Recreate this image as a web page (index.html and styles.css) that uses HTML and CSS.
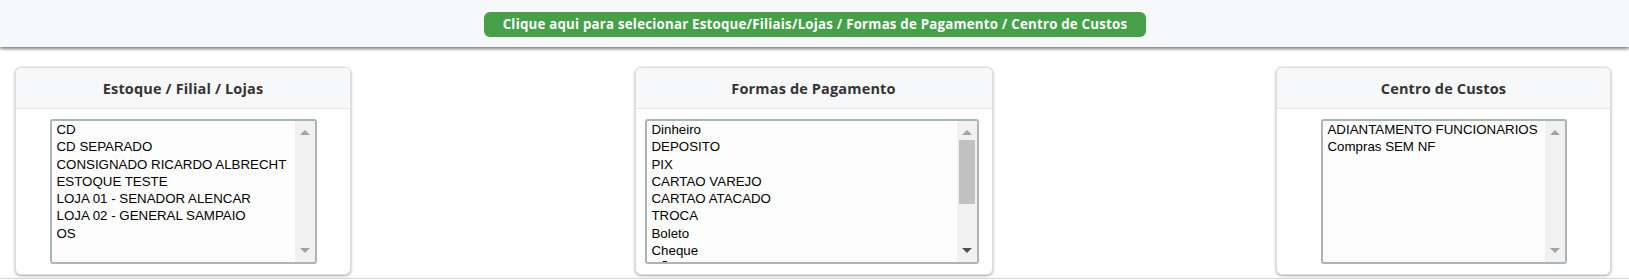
FILE: index.html
```html
<!DOCTYPE html>
<html lang="pt-BR">
<head>
<meta charset="utf-8">
<title>Seleção</title>
<link rel="stylesheet" href="styles.css">
</head>
<body>
<header class="topbar">
  <button class="select-btn" type="button">Clique aqui para selecionar Estoque/Filiais/Lojas / Formas de Pagamento / Centro de Custos</button>
</header>
<main class="cards">
  <section class="card card-estoque">
    <div class="card-head">Estoque / Filial / Lojas</div>
    <div class="card-body">
      <div class="listbox lb-estoque">
        <ul class="options">
          <li>CD</li>
          <li>CD SEPARADO</li>
          <li>CONSIGNADO RICARDO ALBRECHT</li>
          <li>ESTOQUE TESTE</li>
          <li>LOJA 01 - SENADOR ALENCAR</li>
          <li>LOJA 02 - GENERAL SAMPAIO</li>
          <li>OS</li>
        </ul>
        <div class="sbar">
          <div class="sbtn up"><span class="tri tri-up"></span></div>
          <div class="strack"></div>
          <div class="sbtn down"><span class="tri tri-down"></span></div>
        </div>
      </div>
    </div>
  </section>
  <section class="card card-pagto">
    <div class="card-head">Formas de Pagamento</div>
    <div class="card-body">
      <div class="listbox lb-pagto">
        <ul class="options">
          <li>Dinheiro</li>
          <li>DEPOSITO</li>
          <li>PIX</li>
          <li>CARTAO VAREJO</li>
          <li>CARTAO ATACADO</li>
          <li>TROCA</li>
          <li>Boleto</li>
          <li>Cheque</li>
          <li>PÃO</li>
          <li>OUTROS</li>
        </ul>
        <div class="sbar active">
          <div class="sbtn up"><span class="tri tri-up"></span></div>
          <div class="strack"><div class="sthumb"></div></div>
          <div class="sbtn down"><span class="tri tri-down dark"></span></div>
        </div>
      </div>
    </div>
  </section>
  <section class="card card-custos">
    <div class="card-head">Centro de Custos</div>
    <div class="card-body">
      <div class="listbox lb-custos">
        <ul class="options">
          <li>ADIANTAMENTO FUNCIONARIOS</li>
          <li>Compras SEM NF</li>
        </ul>
        <div class="sbar">
          <div class="sbtn up"><span class="tri tri-up"></span></div>
          <div class="strack"></div>
          <div class="sbtn down"><span class="tri tri-down"></span></div>
        </div>
      </div>
    </div>
  </section>
</main>
<footer class="bottom-line"></footer>
</body>
</html>
```

FILE: styles.css
```css
html, body {
  margin: 0;
  padding: 0;
  background: #ffffff;
  font-family: "Open Sans", "Noto Sans", sans-serif;
}

.topbar {
  height: 47px;
  box-sizing: border-box;
  padding-top: 12px;
  background: #f7f8fa;
  display: flex;
  justify-content: center;
  align-items: flex-start;
  box-shadow: 0 2px 3px rgba(0, 0, 0, 0.5);
  position: relative;
  z-index: 1;
}

.select-btn {
  width: 662px;
  height: 25px;
  margin: 0 0 0 1px;
  padding: 0;
  border: none;
  border-radius: 6px;
  background: #45a049;
  color: #ffffff;
  font-family: "Open Sans", "Noto Sans", sans-serif;
  font-weight: 700;
  font-size: 13.3px;
  letter-spacing: 0.21px;
  line-height: 25px;
  text-align: center;
  cursor: pointer;
}

.cards {
  display: flex;
  justify-content: space-between;
  align-items: flex-start;
  padding: 20px 18px 0 15px;
}

.card {
  box-sizing: border-box;
  border: 1px solid #dadde0;
  border-radius: 6px;
  background: #ffffff;
  box-shadow: 0 1px 3px rgba(0, 0, 0, 0.35);
  overflow: hidden;
}

.card-estoque { width: 336px; }
.card-pagto { width: 358px; }
.card-custos { width: 335px; }

.card-head {
  height: 40px;
  border-bottom: 1px solid #e4e6e8;
  background: #f7f8fa;
  display: flex;
  align-items: center;
  justify-content: center;
  font-weight: 700;
  font-size: 14.5px;
  letter-spacing: 0.15px;
  color: #333333;
}

.card-body {
  padding: 10px 0;
  display: flex;
  justify-content: center;
}

.card-pagto .card-body {
  justify-content: flex-start;
  padding-left: 9px;
}

.listbox {
  box-sizing: border-box;
  height: 145px;
  border: 2px solid #aab6b6;
  border-radius: 3px;
  background: #fdfdfd;
  display: flex;
  overflow: hidden;
}

.lb-estoque { width: 267px; }
.lb-pagto { width: 334px; }
.lb-custos { width: 246px; }

.options {
  flex: 1;
  margin: 0;
  padding: 0 0 0 4px;
  list-style: none;
  overflow: hidden;
  font-family: "Liberation Sans", Arial, sans-serif;
  font-size: 13.3px;
  line-height: 17.3px;
  color: #000000;
  white-space: nowrap;
}

.options li {
  padding: 0 1px;
}

.sbar {
  width: 20px;
  flex: none;
  background: #f1f1f1;
  display: flex;
  flex-direction: column;
}

.sbtn {
  height: 19px;
  display: flex;
  justify-content: center;
  box-sizing: border-box;
}

.sbtn.up { padding-top: 9px; }
.sbtn.down { padding-top: 5px; }

.strack {
  flex: 1;
  padding: 0 2px;
}

.sthumb {
  height: 64px;
  background: #c1c1c1;
}

.tri {
  width: 0;
  height: 0;
  border-left: 5px solid transparent;
  border-right: 5px solid transparent;
}

.tri-up { border-bottom: 5px solid #a3a3a3; }
.tri-down { border-top: 5px solid #a3a3a3; }
.tri-down.dark { border-top-color: #505050; }

.bottom-line {
  margin-top: 3px;
  border-top: 1px solid #d6d6d6;
}
```
